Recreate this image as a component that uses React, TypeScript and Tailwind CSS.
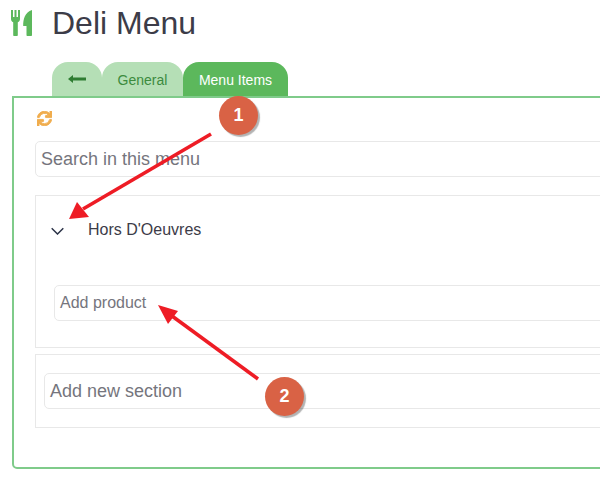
import { FaSync } from "react-icons/fa";

function Cutlery() {
  return (
    <svg width="21" height="26" viewBox="0 0 21 26" fill="#5cb85c" className="shrink-0">
      <path d="M0 0h2v7h1.500V0h2v7H7V0h2v9c0 1.600-.8 2.600-2.200 3.200V25c0 .6-.4 1-1 1H3.200c-.6 0-1-.4-1-1V12.200C.8 11.600 0 10.600 0 9z" />
      <path d="M21 0V25c0 .6-.4 1-1 1h-3.500c-.6 0-1-.4-1-1V16H12.200C12 9 14 2.500 21 0z" />
    </svg>
  );
}

function Field({ text, size, h, pl }: { text: string; size: string; h: string; pl: string }) {
  return (
    <div className={`flex items-center w-full rounded-[5px] border border-[#e8e8e8] bg-white text-[#75757d] ${size} ${h} ${pl}`}>
      {text}
    </div>
  );
}

export default function App() {
  return (
    <div className="relative w-[600px] h-[483px] overflow-hidden bg-white font-['Liberation_Sans',Arial,sans-serif]">
      <div className="flex items-center h-[62px] pb-[17px] pl-[11px] gap-[20px]">
        <Cutlery />
        <h1 className="text-[32px] leading-[36px] text-[#3c3c48]">Deli Menu</h1>
      </div>

      <div className="flex ml-[52px] h-[36px] text-[14px] relative">
        <div className="flex items-center justify-center w-[50px] pb-[2px] rounded-t-[16px] bg-[#b5dfb6]">
          <svg width="18" height="8" viewBox="0 0 18 8" fill="#2f7d32">
            <path d="M5 0 0 4l5 4V5.400h13V2.600H5z" />
          </svg>
        </div>
        <div className="flex items-center justify-center w-[81px] pt-[1px] rounded-t-[16px] bg-[#b5dfb6] text-[#3c8b3e]">General</div>
        <div className="flex items-center justify-center w-[105px] pt-[1px] rounded-t-[16px] bg-[#5cb85c] text-white">Menu Items</div>
      </div>

      <div className="ml-[12px] -mt-[2px] w-[700px] h-[373px] rounded-bl-[5px] border-2 border-[#7fcb8a] bg-white pl-[21px] pt-[13px] relative">
        <FaSync className="text-[#f0ad4e] ml-[2px]" size={15} stroke="currentColor" strokeWidth={30} />
        <div className="mt-[15px] w-[640px]">
          <Field text="Search in this menu" size="text-[18px]" h="h-[36px]" pl="pl-[5px]" />
        </div>
        <div className="mt-[18px] w-[640px] h-[153px] border border-[#e8e8e8] px-[18px]">
          <div className="flex items-center h-[68px] text-[16px] text-[#3c3c48]">
            <svg width="13" height="8" viewBox="0 0 13 8" fill="none" stroke="#2c3448" strokeWidth="1.500" className="ml-[-3px] mt-[2px]">
              <path d="M.7 1.200 6.500 7l5.800-5.800" />
            </svg>
            <span className="ml-[24px]">Hors D'Oeuvres</span>
          </div>
          <div className="mt-[21px]">
            <Field text="Add product" size="text-[16px]" h="h-[36px]" pl="pl-[5px]" />
          </div>
        </div>
        <div className="mt-[6px] w-[640px] h-[74px] border border-[#e8e8e8] pl-[8px] pt-[18px]">
          <Field text="Add new section" size="text-[18px]" h="h-[36px]" pl="pl-[5px]" />
        </div>
      </div>

      <svg width="600" height="483" viewBox="0 0 600 483" className="absolute left-0 top-0 pointer-events-none">
        <path d="M211 134 83 209" stroke="#ee1c25" strokeWidth="3.600" />
        <path d="M69 219 77 202 89 217z" fill="#ee1c25" />
        <path d="M258 379 172 316" stroke="#ee1c25" strokeWidth="3.600" />
        <path d="M158 305 178 311 168 324z" fill="#ee1c25" />
      </svg>

      <div className="absolute left-[219px] top-[96px] flex items-center justify-center w-[39px] h-[39px] rounded-full bg-[#d96245] text-white font-bold text-[18px] shadow-[2px_2px_1px_rgba(0,0,0,0.3)]">1</div>
      <div className="absolute left-[265px] top-[377px] flex items-center justify-center w-[39px] h-[39px] rounded-full bg-[#d96245] text-white font-bold text-[18px] shadow-[2px_2px_1px_rgba(0,0,0,0.3)]">2</div>
    </div>
  );
}
